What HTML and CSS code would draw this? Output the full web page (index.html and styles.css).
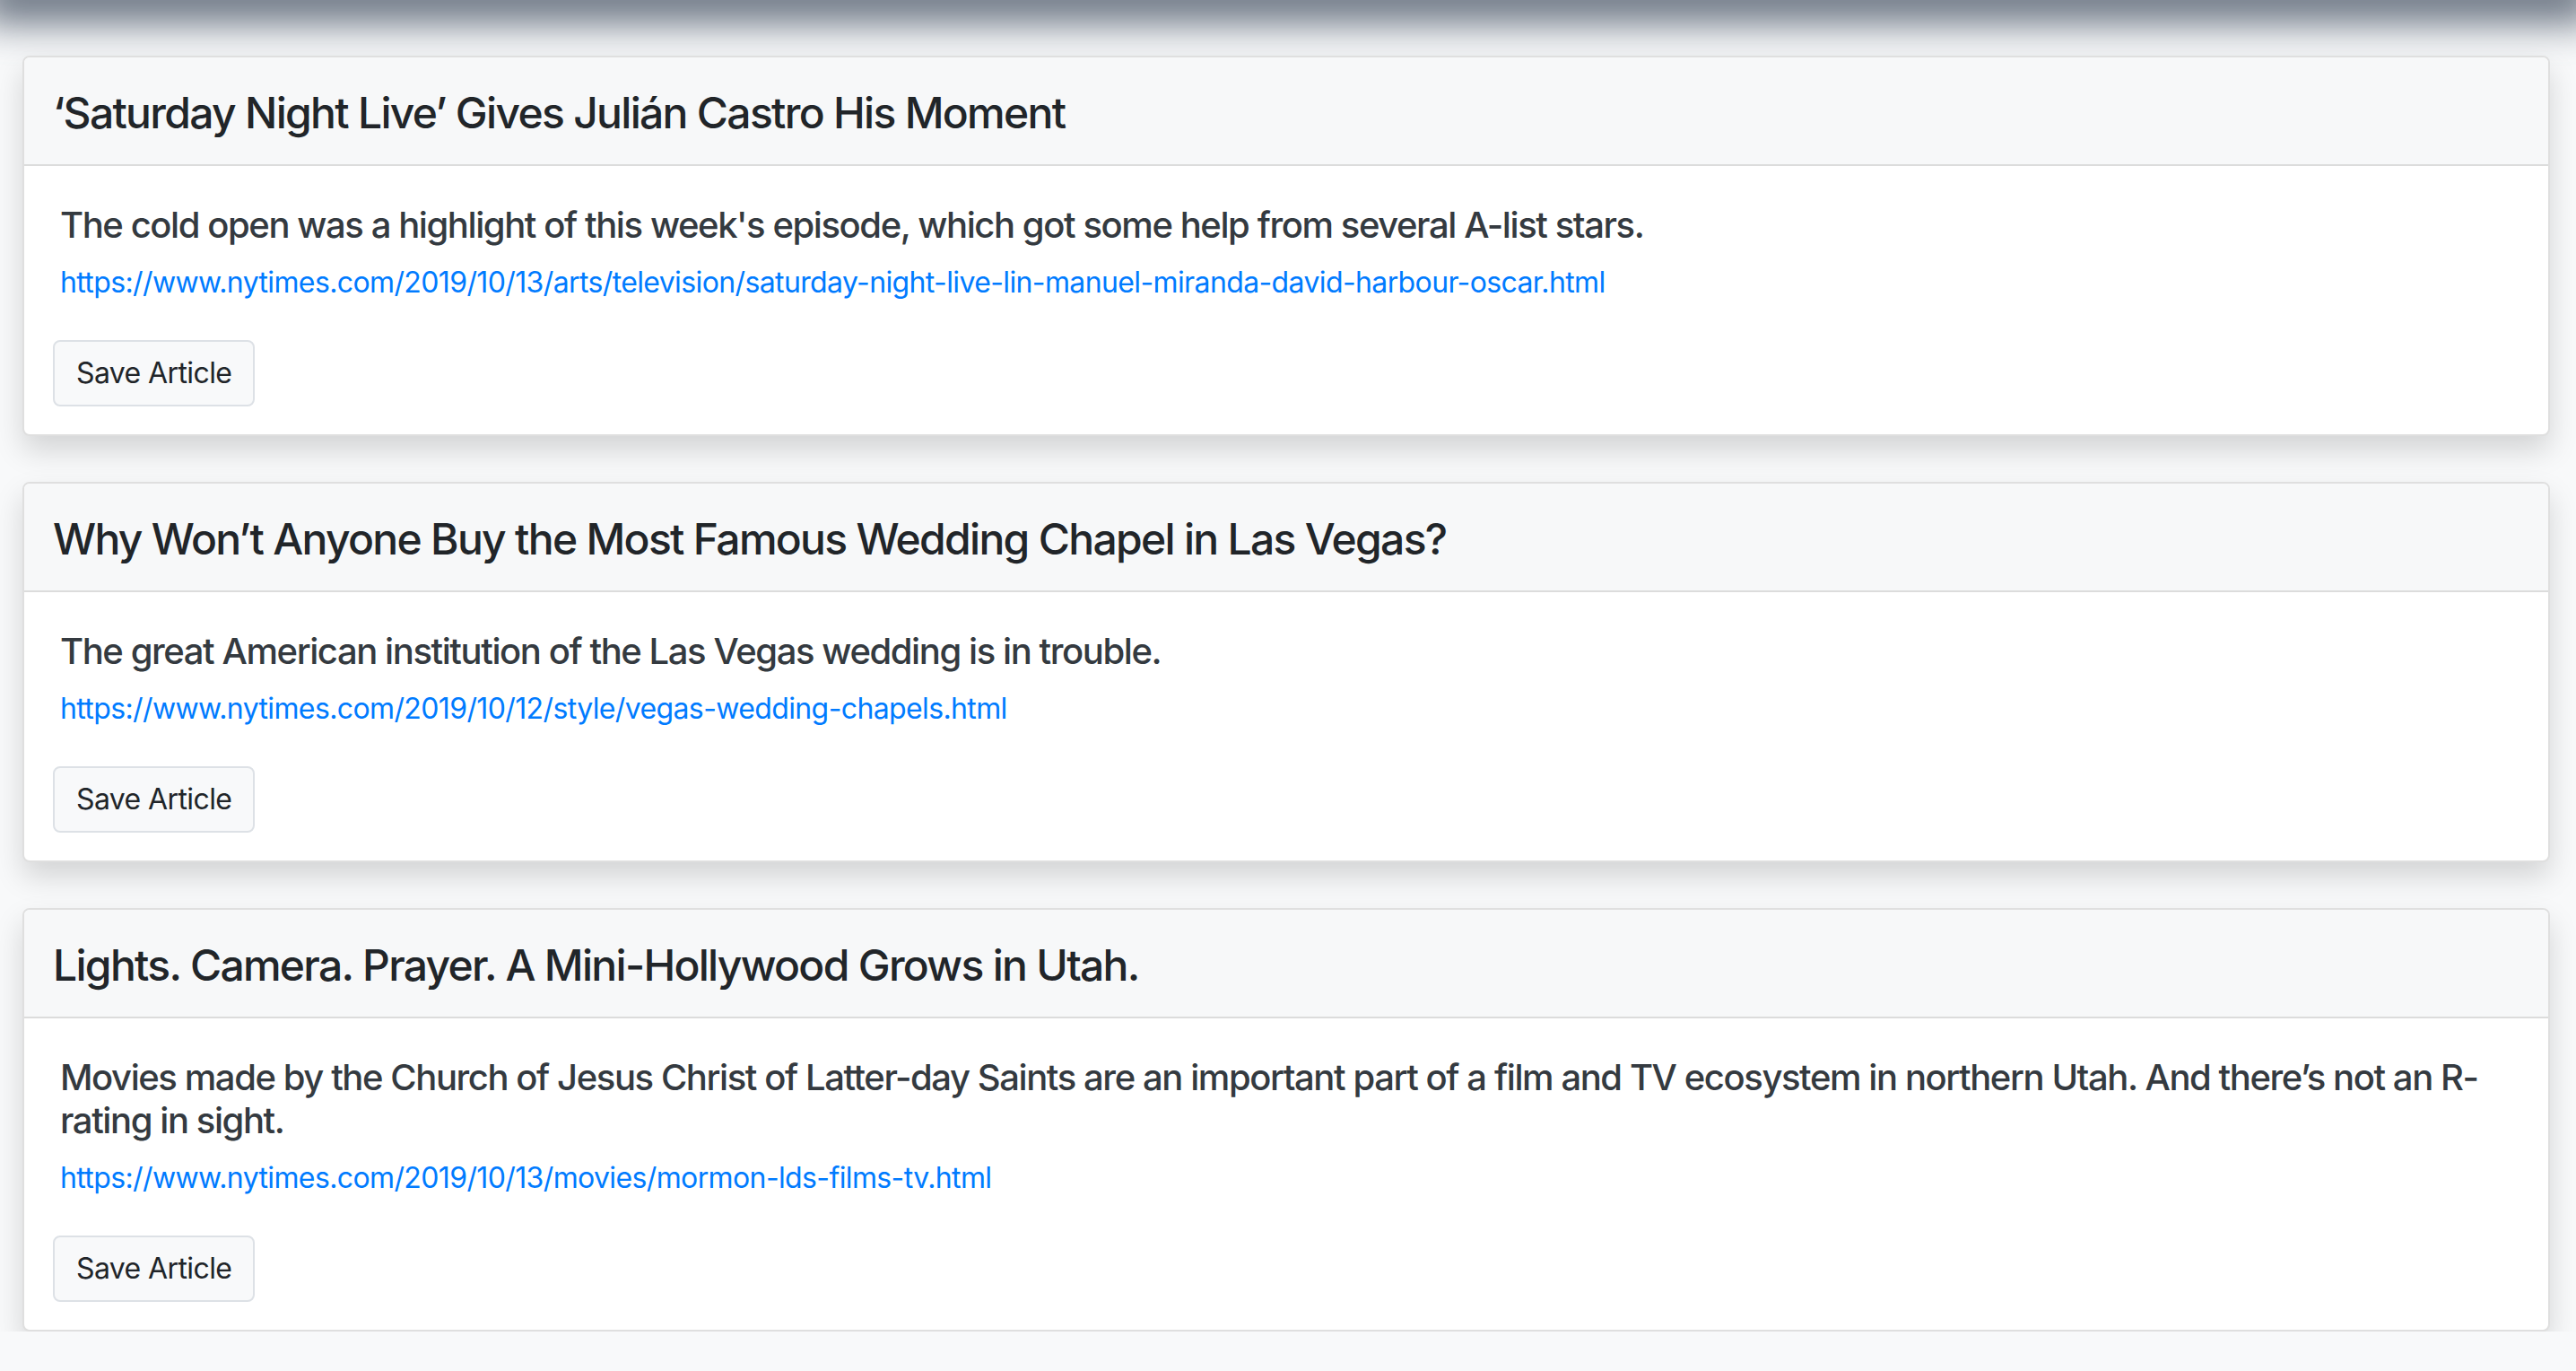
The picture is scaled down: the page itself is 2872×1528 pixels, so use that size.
FILE: index.html
```html
<!DOCTYPE html>
<html lang="en">
<head>
<meta charset="utf-8">
<title>Articles</title>
<link rel="stylesheet" href="styles.css">
</head>
<body>
<div class="navshadow"></div>
<main class="list">
  <article class="card">
    <header class="card-header"><h4 class="card-title">‘Saturday Night Live’ Gives Julián Castro His Moment</h4></header>
    <div class="card-body">
      <h5 class="summary">The cold open was a highlight of this week's episode, which got some help from several A-list stars.</h5>
      <p class="link"><a href="#">https://www.nytimes.com/2019/10/13/arts/television/saturday-night-live-lin-manuel-miranda-david-harbour-oscar.html</a></p>
      <button class="btn" type="button">Save Article</button>
    </div>
  </article>
  <article class="card">
    <header class="card-header"><h4 class="card-title">Why Won’t Anyone Buy the Most Famous Wedding Chapel in Las Vegas?</h4></header>
    <div class="card-body">
      <h5 class="summary">The great American institution of the Las Vegas wedding is in trouble.</h5>
      <p class="link"><a href="#">https://www.nytimes.com/2019/10/12/style/vegas-wedding-chapels.html</a></p>
      <button class="btn" type="button">Save Article</button>
    </div>
  </article>
  <article class="card">
    <header class="card-header"><h4 class="card-title">Lights. Camera. Prayer. A Mini-Hollywood Grows in Utah.</h4></header>
    <div class="card-body">
      <h5 class="summary">Movies made by the Church of Jesus Christ of Latter-day Saints are an important part of a film and TV ecosystem in northern Utah. And there’s not an R-rating in sight.</h5>
      <p class="link"><a href="#">https://www.nytimes.com/2019/10/13/movies/mormon-lds-films-tv.html</a></p>
      <button class="btn" type="button">Save Article</button>
    </div>
  </article>
</main>
</body>
</html>
```
FILE: styles.css
```css
* { box-sizing: border-box; }
html, body { margin: 0; padding: 0; }
body {
  background: #f8f9fa;
  font-family: Inter, "Noto Sans", "Liberation Sans", sans-serif;
  color: #212529;
  overflow: hidden;
}
.navshadow {
  height: 20px;
  margin-top: -20px;
  box-shadow: 0 6px 44px 20px rgba(70, 82, 100, 0.8);
}
.list {
  display: flex;
  flex-direction: column;
  gap: 51px;
  padding: 62px 29px 0 25px;
}
.card {
  background: #fff;
  border: 2px solid #dfdfdf;
  border-radius: 8px;
  box-shadow: 0 16px 32px rgba(0, 0, 0, 0.15);
  overflow: hidden;
}
.card-header {
  background: #f7f8f9;
  border-bottom: 2px solid #dcdcdc;
  padding: 33px 32px 28px;
}
.card-title {
  margin: 0;
  font-size: 48px;
  line-height: 58px;
  font-weight: 500;
  letter-spacing: -1.7px;
  color: #212529;
}
.card-body {
  padding: 42px 32px 31px;
}
.summary {
  margin: 0 8px;
  font-size: 40px;
  line-height: 48px;
  font-weight: 500;
  letter-spacing: -1.42px;
  color: #343a40;
}
.link {
  margin: 16px 8px 40px;
  font-size: 32px;
  line-height: 48px;
  letter-spacing: -0.62px;
}
.link a {
  color: #007bff;
  text-decoration: none;
}
.btn {
  display: block;
  font-family: inherit;
  font-size: 32px;
  line-height: 48px;
  letter-spacing: -0.6px;
  padding: 11px 24px;
  color: #212529;
  background: #f8f9fa;
  border: 2px solid #dde1e6;
  border-radius: 8px;
}
```
